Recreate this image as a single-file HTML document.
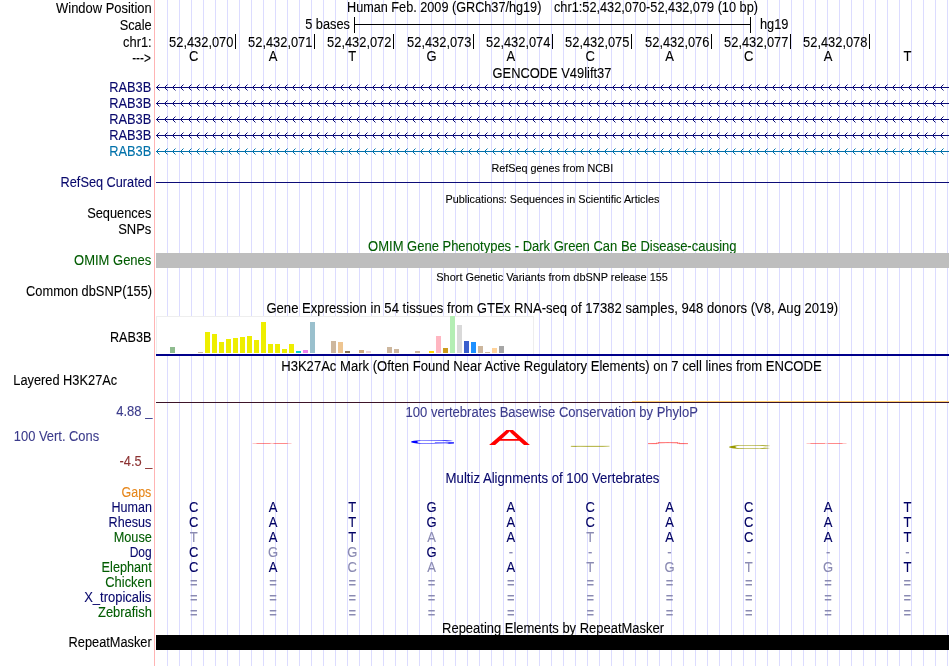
<!DOCTYPE html>
<html lang="en"><head><meta charset="utf-8"><title>UCSC Genome Browser chr1:52,432,070-52,432,079</title>
<style>html,body{margin:0;padding:0;background:#fff}body{width:950px;height:666px;overflow:hidden}svg{display:block;will-change:transform;font-family:"Liberation Sans", sans-serif}text{white-space:pre;stroke-width:0.1px}</style>
</head><body>
<svg width="950" height="666" viewBox="0 0 950 666">
<rect width="950" height="666" fill="#fff"/>
<g id="guides" fill="#dcdcff">
<rect x="167" y="0" width="1" height="666"/>
<rect x="179" y="0" width="1" height="666"/>
<rect x="191" y="0" width="1" height="666"/>
<rect x="203" y="0" width="1" height="666"/>
<rect x="215" y="0" width="1" height="666"/>
<rect x="227" y="0" width="1" height="666"/>
<rect x="239" y="0" width="1" height="666"/>
<rect x="251" y="0" width="1" height="666"/>
<rect x="263" y="0" width="1" height="666"/>
<rect x="275" y="0" width="1" height="666"/>
<rect x="287" y="0" width="1" height="666"/>
<rect x="299" y="0" width="1" height="666"/>
<rect x="311" y="0" width="1" height="666"/>
<rect x="323" y="0" width="1" height="666"/>
<rect x="335" y="0" width="1" height="666"/>
<rect x="347" y="0" width="1" height="666"/>
<rect x="359" y="0" width="1" height="666"/>
<rect x="371" y="0" width="1" height="666"/>
<rect x="383" y="0" width="1" height="666"/>
<rect x="395" y="0" width="1" height="666"/>
<rect x="407" y="0" width="1" height="666"/>
<rect x="419" y="0" width="1" height="666"/>
<rect x="431" y="0" width="1" height="666"/>
<rect x="443" y="0" width="1" height="666"/>
<rect x="455" y="0" width="1" height="666"/>
<rect x="467" y="0" width="1" height="666"/>
<rect x="479" y="0" width="1" height="666"/>
<rect x="491" y="0" width="1" height="666"/>
<rect x="503" y="0" width="1" height="666"/>
<rect x="515" y="0" width="1" height="666"/>
<rect x="527" y="0" width="1" height="666"/>
<rect x="539" y="0" width="1" height="666"/>
<rect x="551" y="0" width="1" height="666"/>
<rect x="563" y="0" width="1" height="666"/>
<rect x="575" y="0" width="1" height="666"/>
<rect x="587" y="0" width="1" height="666"/>
<rect x="599" y="0" width="1" height="666"/>
<rect x="611" y="0" width="1" height="666"/>
<rect x="623" y="0" width="1" height="666"/>
<rect x="635" y="0" width="1" height="666"/>
<rect x="647" y="0" width="1" height="666"/>
<rect x="659" y="0" width="1" height="666"/>
<rect x="671" y="0" width="1" height="666"/>
<rect x="683" y="0" width="1" height="666"/>
<rect x="695" y="0" width="1" height="666"/>
<rect x="707" y="0" width="1" height="666"/>
<rect x="719" y="0" width="1" height="666"/>
<rect x="731" y="0" width="1" height="666"/>
<rect x="743" y="0" width="1" height="666"/>
<rect x="755" y="0" width="1" height="666"/>
<rect x="767" y="0" width="1" height="666"/>
<rect x="779" y="0" width="1" height="666"/>
<rect x="791" y="0" width="1" height="666"/>
<rect x="803" y="0" width="1" height="666"/>
<rect x="815" y="0" width="1" height="666"/>
<rect x="827" y="0" width="1" height="666"/>
<rect x="839" y="0" width="1" height="666"/>
<rect x="851" y="0" width="1" height="666"/>
<rect x="863" y="0" width="1" height="666"/>
<rect x="875" y="0" width="1" height="666"/>
<rect x="887" y="0" width="1" height="666"/>
<rect x="899" y="0" width="1" height="666"/>
<rect x="911" y="0" width="1" height="666"/>
<rect x="923" y="0" width="1" height="666"/>
<rect x="935" y="0" width="1" height="666"/>
<rect x="947" y="0" width="1" height="666"/>
</g>
<rect x="154" y="0" width="1" height="666" fill="#ffb4b4"/>
<text x="56.1" y="12.5" font-size="14" fill="#000" stroke="#000" textLength="95.6" lengthAdjust="spacingAndGlyphs">Window Position</text>
<text x="119.7" y="29.5" font-size="14" fill="#000" stroke="#000" textLength="32" lengthAdjust="spacingAndGlyphs">Scale</text>
<text x="123.1" y="46.7" font-size="14" fill="#000" stroke="#000" textLength="28.6" lengthAdjust="spacingAndGlyphs">chr1:</text>
<text x="132.2" y="62.7" font-size="14" fill="#000" stroke="#000" textLength="18.6" lengthAdjust="spacingAndGlyphs">---&gt;</text>
<text x="347" y="12.3" font-size="14" fill="#000" stroke="#000" textLength="194.4" lengthAdjust="spacingAndGlyphs">Human Feb. 2009 (GRCh37/hg19)</text>
<text x="554" y="12.3" font-size="14" fill="#000" stroke="#000" textLength="204" lengthAdjust="spacingAndGlyphs">chr1:52,432,070-52,432,079 (10 bp)</text>
<g fill="#000">
<rect x="354" y="24" width="397" height="1"/>
<rect x="354" y="17" width="1" height="16"/>
<rect x="750" y="17" width="1" height="16"/>
</g>
<text x="305.2" y="28.5" font-size="14" fill="#000" stroke="#000" textLength="44.8" lengthAdjust="spacingAndGlyphs">5 bases</text>
<text x="760" y="28.5" font-size="14" fill="#000" stroke="#000" textLength="28.5" lengthAdjust="spacingAndGlyphs">hg19</text>
<text x="189.0" y="60.6" font-size="14" fill="#000" stroke="#000" textLength="9.4" lengthAdjust="spacingAndGlyphs">C</text>
<text x="268.66" y="60.6" font-size="14" fill="#000" stroke="#000" textLength="8.68" lengthAdjust="spacingAndGlyphs">A</text>
<text x="348.32" y="60.6" font-size="14" fill="#000" stroke="#000" textLength="7.96" lengthAdjust="spacingAndGlyphs">T</text>
<text x="426.54" y="60.6" font-size="14" fill="#000" stroke="#000" textLength="10.13" lengthAdjust="spacingAndGlyphs">G</text>
<text x="506.56" y="60.6" font-size="14" fill="#000" stroke="#000" textLength="8.68" lengthAdjust="spacingAndGlyphs">A</text>
<text x="585.5" y="60.6" font-size="14" fill="#000" stroke="#000" textLength="9.4" lengthAdjust="spacingAndGlyphs">C</text>
<text x="665.16" y="60.6" font-size="14" fill="#000" stroke="#000" textLength="8.68" lengthAdjust="spacingAndGlyphs">A</text>
<text x="744.1" y="60.6" font-size="14" fill="#000" stroke="#000" textLength="9.4" lengthAdjust="spacingAndGlyphs">C</text>
<text x="823.76" y="60.6" font-size="14" fill="#000" stroke="#000" textLength="8.68" lengthAdjust="spacingAndGlyphs">A</text>
<text x="903.42" y="60.6" font-size="14" fill="#000" stroke="#000" textLength="7.96" lengthAdjust="spacingAndGlyphs">T</text>
<rect x="235" y="34" width="1" height="15" fill="#000"/>
<text x="169.1" y="46.7" font-size="14" fill="#000" stroke="#000" textLength="64.3" lengthAdjust="spacingAndGlyphs">52,432,070</text>
<rect x="314" y="34" width="1" height="15" fill="#000"/>
<text x="248.1" y="46.7" font-size="14" fill="#000" stroke="#000" textLength="64.3" lengthAdjust="spacingAndGlyphs">52,432,071</text>
<rect x="393" y="34" width="1" height="15" fill="#000"/>
<text x="327.1" y="46.7" font-size="14" fill="#000" stroke="#000" textLength="64.3" lengthAdjust="spacingAndGlyphs">52,432,072</text>
<rect x="473" y="34" width="1" height="15" fill="#000"/>
<text x="407.1" y="46.7" font-size="14" fill="#000" stroke="#000" textLength="64.3" lengthAdjust="spacingAndGlyphs">52,432,073</text>
<rect x="552" y="34" width="1" height="15" fill="#000"/>
<text x="486.1" y="46.7" font-size="14" fill="#000" stroke="#000" textLength="64.3" lengthAdjust="spacingAndGlyphs">52,432,074</text>
<rect x="631" y="34" width="1" height="15" fill="#000"/>
<text x="565.1" y="46.7" font-size="14" fill="#000" stroke="#000" textLength="64.3" lengthAdjust="spacingAndGlyphs">52,432,075</text>
<rect x="711" y="34" width="1" height="15" fill="#000"/>
<text x="645.1" y="46.7" font-size="14" fill="#000" stroke="#000" textLength="64.3" lengthAdjust="spacingAndGlyphs">52,432,076</text>
<rect x="790" y="34" width="1" height="15" fill="#000"/>
<text x="724.1" y="46.7" font-size="14" fill="#000" stroke="#000" textLength="64.3" lengthAdjust="spacingAndGlyphs">52,432,077</text>
<rect x="869" y="34" width="1" height="15" fill="#000"/>
<text x="803.1" y="46.7" font-size="14" fill="#000" stroke="#000" textLength="64.3" lengthAdjust="spacingAndGlyphs">52,432,078</text>
<text x="492.6" y="77.7" font-size="14" fill="#000" stroke="#000" textLength="118.8" lengthAdjust="spacingAndGlyphs">GENCODE V49lift37</text>
<g stroke="#0c0c78" stroke-width="1" fill="none">
<path d="M156 87.5H949"/>
<path d="M159.5 84.5L156.5 87.5L159.5 90.5M167.5 84.5L164.5 87.5L167.5 90.5M175.5 84.5L172.5 87.5L175.5 90.5M183.5 84.5L180.5 87.5L183.5 90.5M191.5 84.5L188.5 87.5L191.5 90.5M199.5 84.5L196.5 87.5L199.5 90.5M207.5 84.5L204.5 87.5L207.5 90.5M215.5 84.5L212.5 87.5L215.5 90.5M223.5 84.5L220.5 87.5L223.5 90.5M231.5 84.5L228.5 87.5L231.5 90.5M239.5 84.5L236.5 87.5L239.5 90.5M247.5 84.5L244.5 87.5L247.5 90.5M255.5 84.5L252.5 87.5L255.5 90.5M263.5 84.5L260.5 87.5L263.5 90.5M271.5 84.5L268.5 87.5L271.5 90.5M279.5 84.5L276.5 87.5L279.5 90.5M287.5 84.5L284.5 87.5L287.5 90.5M295.5 84.5L292.5 87.5L295.5 90.5M303.5 84.5L300.5 87.5L303.5 90.5M311.5 84.5L308.5 87.5L311.5 90.5M319.5 84.5L316.5 87.5L319.5 90.5M327.5 84.5L324.5 87.5L327.5 90.5M335.5 84.5L332.5 87.5L335.5 90.5M343.5 84.5L340.5 87.5L343.5 90.5M351.5 84.5L348.5 87.5L351.5 90.5M359.5 84.5L356.5 87.5L359.5 90.5M367.5 84.5L364.5 87.5L367.5 90.5M375.5 84.5L372.5 87.5L375.5 90.5M383.5 84.5L380.5 87.5L383.5 90.5M391.5 84.5L388.5 87.5L391.5 90.5M399.5 84.5L396.5 87.5L399.5 90.5M407.5 84.5L404.5 87.5L407.5 90.5M415.5 84.5L412.5 87.5L415.5 90.5M423.5 84.5L420.5 87.5L423.5 90.5M431.5 84.5L428.5 87.5L431.5 90.5M439.5 84.5L436.5 87.5L439.5 90.5M447.5 84.5L444.5 87.5L447.5 90.5M455.5 84.5L452.5 87.5L455.5 90.5M463.5 84.5L460.5 87.5L463.5 90.5M471.5 84.5L468.5 87.5L471.5 90.5M479.5 84.5L476.5 87.5L479.5 90.5M487.5 84.5L484.5 87.5L487.5 90.5M495.5 84.5L492.5 87.5L495.5 90.5M503.5 84.5L500.5 87.5L503.5 90.5M511.5 84.5L508.5 87.5L511.5 90.5M519.5 84.5L516.5 87.5L519.5 90.5M527.5 84.5L524.5 87.5L527.5 90.5M535.5 84.5L532.5 87.5L535.5 90.5M543.5 84.5L540.5 87.5L543.5 90.5M551.5 84.5L548.5 87.5L551.5 90.5M559.5 84.5L556.5 87.5L559.5 90.5M567.5 84.5L564.5 87.5L567.5 90.5M575.5 84.5L572.5 87.5L575.5 90.5M583.5 84.5L580.5 87.5L583.5 90.5M591.5 84.5L588.5 87.5L591.5 90.5M599.5 84.5L596.5 87.5L599.5 90.5M607.5 84.5L604.5 87.5L607.5 90.5M615.5 84.5L612.5 87.5L615.5 90.5M623.5 84.5L620.5 87.5L623.5 90.5M631.5 84.5L628.5 87.5L631.5 90.5M639.5 84.5L636.5 87.5L639.5 90.5M647.5 84.5L644.5 87.5L647.5 90.5M655.5 84.5L652.5 87.5L655.5 90.5M663.5 84.5L660.5 87.5L663.5 90.5M671.5 84.5L668.5 87.5L671.5 90.5M679.5 84.5L676.5 87.5L679.5 90.5M687.5 84.5L684.5 87.5L687.5 90.5M695.5 84.5L692.5 87.5L695.5 90.5M703.5 84.5L700.5 87.5L703.5 90.5M711.5 84.5L708.5 87.5L711.5 90.5M719.5 84.5L716.5 87.5L719.5 90.5M727.5 84.5L724.5 87.5L727.5 90.5M735.5 84.5L732.5 87.5L735.5 90.5M743.5 84.5L740.5 87.5L743.5 90.5M751.5 84.5L748.5 87.5L751.5 90.5M759.5 84.5L756.5 87.5L759.5 90.5M767.5 84.5L764.5 87.5L767.5 90.5M775.5 84.5L772.5 87.5L775.5 90.5M783.5 84.5L780.5 87.5L783.5 90.5M791.5 84.5L788.5 87.5L791.5 90.5M799.5 84.5L796.5 87.5L799.5 90.5M807.5 84.5L804.5 87.5L807.5 90.5M815.5 84.5L812.5 87.5L815.5 90.5M823.5 84.5L820.5 87.5L823.5 90.5M831.5 84.5L828.5 87.5L831.5 90.5M839.5 84.5L836.5 87.5L839.5 90.5M847.5 84.5L844.5 87.5L847.5 90.5M855.5 84.5L852.5 87.5L855.5 90.5M863.5 84.5L860.5 87.5L863.5 90.5M871.5 84.5L868.5 87.5L871.5 90.5M879.5 84.5L876.5 87.5L879.5 90.5M887.5 84.5L884.5 87.5L887.5 90.5M895.5 84.5L892.5 87.5L895.5 90.5M903.5 84.5L900.5 87.5L903.5 90.5M911.5 84.5L908.5 87.5L911.5 90.5M919.5 84.5L916.5 87.5L919.5 90.5M927.5 84.5L924.5 87.5L927.5 90.5M935.5 84.5L932.5 87.5L935.5 90.5M943.5 84.5L940.5 87.5L943.5 90.5"/>
</g>
<text x="109.3" y="91.7" font-size="14" fill="#08086c" stroke="#08086c" textLength="42" lengthAdjust="spacingAndGlyphs">RAB3B</text>
<g stroke="#0c0c78" stroke-width="1" fill="none">
<path d="M156 103.5H949"/>
<path d="M159.5 100.5L156.5 103.5L159.5 106.5M167.5 100.5L164.5 103.5L167.5 106.5M175.5 100.5L172.5 103.5L175.5 106.5M183.5 100.5L180.5 103.5L183.5 106.5M191.5 100.5L188.5 103.5L191.5 106.5M199.5 100.5L196.5 103.5L199.5 106.5M207.5 100.5L204.5 103.5L207.5 106.5M215.5 100.5L212.5 103.5L215.5 106.5M223.5 100.5L220.5 103.5L223.5 106.5M231.5 100.5L228.5 103.5L231.5 106.5M239.5 100.5L236.5 103.5L239.5 106.5M247.5 100.5L244.5 103.5L247.5 106.5M255.5 100.5L252.5 103.5L255.5 106.5M263.5 100.5L260.5 103.5L263.5 106.5M271.5 100.5L268.5 103.5L271.5 106.5M279.5 100.5L276.5 103.5L279.5 106.5M287.5 100.5L284.5 103.5L287.5 106.5M295.5 100.5L292.5 103.5L295.5 106.5M303.5 100.5L300.5 103.5L303.5 106.5M311.5 100.5L308.5 103.5L311.5 106.5M319.5 100.5L316.5 103.5L319.5 106.5M327.5 100.5L324.5 103.5L327.5 106.5M335.5 100.5L332.5 103.5L335.5 106.5M343.5 100.5L340.5 103.5L343.5 106.5M351.5 100.5L348.5 103.5L351.5 106.5M359.5 100.5L356.5 103.5L359.5 106.5M367.5 100.5L364.5 103.5L367.5 106.5M375.5 100.5L372.5 103.5L375.5 106.5M383.5 100.5L380.5 103.5L383.5 106.5M391.5 100.5L388.5 103.5L391.5 106.5M399.5 100.5L396.5 103.5L399.5 106.5M407.5 100.5L404.5 103.5L407.5 106.5M415.5 100.5L412.5 103.5L415.5 106.5M423.5 100.5L420.5 103.5L423.5 106.5M431.5 100.5L428.5 103.5L431.5 106.5M439.5 100.5L436.5 103.5L439.5 106.5M447.5 100.5L444.5 103.5L447.5 106.5M455.5 100.5L452.5 103.5L455.5 106.5M463.5 100.5L460.5 103.5L463.5 106.5M471.5 100.5L468.5 103.5L471.5 106.5M479.5 100.5L476.5 103.5L479.5 106.5M487.5 100.5L484.5 103.5L487.5 106.5M495.5 100.5L492.5 103.5L495.5 106.5M503.5 100.5L500.5 103.5L503.5 106.5M511.5 100.5L508.5 103.5L511.5 106.5M519.5 100.5L516.5 103.5L519.5 106.5M527.5 100.5L524.5 103.5L527.5 106.5M535.5 100.5L532.5 103.5L535.5 106.5M543.5 100.5L540.5 103.5L543.5 106.5M551.5 100.5L548.5 103.5L551.5 106.5M559.5 100.5L556.5 103.5L559.5 106.5M567.5 100.5L564.5 103.5L567.5 106.5M575.5 100.5L572.5 103.5L575.5 106.5M583.5 100.5L580.5 103.5L583.5 106.5M591.5 100.5L588.5 103.5L591.5 106.5M599.5 100.5L596.5 103.5L599.5 106.5M607.5 100.5L604.5 103.5L607.5 106.5M615.5 100.5L612.5 103.5L615.5 106.5M623.5 100.5L620.5 103.5L623.5 106.5M631.5 100.5L628.5 103.5L631.5 106.5M639.5 100.5L636.5 103.5L639.5 106.5M647.5 100.5L644.5 103.5L647.5 106.5M655.5 100.5L652.5 103.5L655.5 106.5M663.5 100.5L660.5 103.5L663.5 106.5M671.5 100.5L668.5 103.5L671.5 106.5M679.5 100.5L676.5 103.5L679.5 106.5M687.5 100.5L684.5 103.5L687.5 106.5M695.5 100.5L692.5 103.5L695.5 106.5M703.5 100.5L700.5 103.5L703.5 106.5M711.5 100.5L708.5 103.5L711.5 106.5M719.5 100.5L716.5 103.5L719.5 106.5M727.5 100.5L724.5 103.5L727.5 106.5M735.5 100.5L732.5 103.5L735.5 106.5M743.5 100.5L740.5 103.5L743.5 106.5M751.5 100.5L748.5 103.5L751.5 106.5M759.5 100.5L756.5 103.5L759.5 106.5M767.5 100.5L764.5 103.5L767.5 106.5M775.5 100.5L772.5 103.5L775.5 106.5M783.5 100.5L780.5 103.5L783.5 106.5M791.5 100.5L788.5 103.5L791.5 106.5M799.5 100.5L796.5 103.5L799.5 106.5M807.5 100.5L804.5 103.5L807.5 106.5M815.5 100.5L812.5 103.5L815.5 106.5M823.5 100.5L820.5 103.5L823.5 106.5M831.5 100.5L828.5 103.5L831.5 106.5M839.5 100.5L836.5 103.5L839.5 106.5M847.5 100.5L844.5 103.5L847.5 106.5M855.5 100.5L852.5 103.5L855.5 106.5M863.5 100.5L860.5 103.5L863.5 106.5M871.5 100.5L868.5 103.5L871.5 106.5M879.5 100.5L876.5 103.5L879.5 106.5M887.5 100.5L884.5 103.5L887.5 106.5M895.5 100.5L892.5 103.5L895.5 106.5M903.5 100.5L900.5 103.5L903.5 106.5M911.5 100.5L908.5 103.5L911.5 106.5M919.5 100.5L916.5 103.5L919.5 106.5M927.5 100.5L924.5 103.5L927.5 106.5M935.5 100.5L932.5 103.5L935.5 106.5M943.5 100.5L940.5 103.5L943.5 106.5"/>
</g>
<text x="109.3" y="107.7" font-size="14" fill="#08086c" stroke="#08086c" textLength="42" lengthAdjust="spacingAndGlyphs">RAB3B</text>
<g stroke="#0c0c78" stroke-width="1" fill="none">
<path d="M156 119.5H949"/>
<path d="M159.5 116.5L156.5 119.5L159.5 122.5M167.5 116.5L164.5 119.5L167.5 122.5M175.5 116.5L172.5 119.5L175.5 122.5M183.5 116.5L180.5 119.5L183.5 122.5M191.5 116.5L188.5 119.5L191.5 122.5M199.5 116.5L196.5 119.5L199.5 122.5M207.5 116.5L204.5 119.5L207.5 122.5M215.5 116.5L212.5 119.5L215.5 122.5M223.5 116.5L220.5 119.5L223.5 122.5M231.5 116.5L228.5 119.5L231.5 122.5M239.5 116.5L236.5 119.5L239.5 122.5M247.5 116.5L244.5 119.5L247.5 122.5M255.5 116.5L252.5 119.5L255.5 122.5M263.5 116.5L260.5 119.5L263.5 122.5M271.5 116.5L268.5 119.5L271.5 122.5M279.5 116.5L276.5 119.5L279.5 122.5M287.5 116.5L284.5 119.5L287.5 122.5M295.5 116.5L292.5 119.5L295.5 122.5M303.5 116.5L300.5 119.5L303.5 122.5M311.5 116.5L308.5 119.5L311.5 122.5M319.5 116.5L316.5 119.5L319.5 122.5M327.5 116.5L324.5 119.5L327.5 122.5M335.5 116.5L332.5 119.5L335.5 122.5M343.5 116.5L340.5 119.5L343.5 122.5M351.5 116.5L348.5 119.5L351.5 122.5M359.5 116.5L356.5 119.5L359.5 122.5M367.5 116.5L364.5 119.5L367.5 122.5M375.5 116.5L372.5 119.5L375.5 122.5M383.5 116.5L380.5 119.5L383.5 122.5M391.5 116.5L388.5 119.5L391.5 122.5M399.5 116.5L396.5 119.5L399.5 122.5M407.5 116.5L404.5 119.5L407.5 122.5M415.5 116.5L412.5 119.5L415.5 122.5M423.5 116.5L420.5 119.5L423.5 122.5M431.5 116.5L428.5 119.5L431.5 122.5M439.5 116.5L436.5 119.5L439.5 122.5M447.5 116.5L444.5 119.5L447.5 122.5M455.5 116.5L452.5 119.5L455.5 122.5M463.5 116.5L460.5 119.5L463.5 122.5M471.5 116.5L468.5 119.5L471.5 122.5M479.5 116.5L476.5 119.5L479.5 122.5M487.5 116.5L484.5 119.5L487.5 122.5M495.5 116.5L492.5 119.5L495.5 122.5M503.5 116.5L500.5 119.5L503.5 122.5M511.5 116.5L508.5 119.5L511.5 122.5M519.5 116.5L516.5 119.5L519.5 122.5M527.5 116.5L524.5 119.5L527.5 122.5M535.5 116.5L532.5 119.5L535.5 122.5M543.5 116.5L540.5 119.5L543.5 122.5M551.5 116.5L548.5 119.5L551.5 122.5M559.5 116.5L556.5 119.5L559.5 122.5M567.5 116.5L564.5 119.5L567.5 122.5M575.5 116.5L572.5 119.5L575.5 122.5M583.5 116.5L580.5 119.5L583.5 122.5M591.5 116.5L588.5 119.5L591.5 122.5M599.5 116.5L596.5 119.5L599.5 122.5M607.5 116.5L604.5 119.5L607.5 122.5M615.5 116.5L612.5 119.5L615.5 122.5M623.5 116.5L620.5 119.5L623.5 122.5M631.5 116.5L628.5 119.5L631.5 122.5M639.5 116.5L636.5 119.5L639.5 122.5M647.5 116.5L644.5 119.5L647.5 122.5M655.5 116.5L652.5 119.5L655.5 122.5M663.5 116.5L660.5 119.5L663.5 122.5M671.5 116.5L668.5 119.5L671.5 122.5M679.5 116.5L676.5 119.5L679.5 122.5M687.5 116.5L684.5 119.5L687.5 122.5M695.5 116.5L692.5 119.5L695.5 122.5M703.5 116.5L700.5 119.5L703.5 122.5M711.5 116.5L708.5 119.5L711.5 122.5M719.5 116.5L716.5 119.5L719.5 122.5M727.5 116.5L724.5 119.5L727.5 122.5M735.5 116.5L732.5 119.5L735.5 122.5M743.5 116.5L740.5 119.5L743.5 122.5M751.5 116.5L748.5 119.5L751.5 122.5M759.5 116.5L756.5 119.5L759.5 122.5M767.5 116.5L764.5 119.5L767.5 122.5M775.5 116.5L772.5 119.5L775.5 122.5M783.5 116.5L780.5 119.5L783.5 122.5M791.5 116.5L788.5 119.5L791.5 122.5M799.5 116.5L796.5 119.5L799.5 122.5M807.5 116.5L804.5 119.5L807.5 122.5M815.5 116.5L812.5 119.5L815.5 122.5M823.5 116.5L820.5 119.5L823.5 122.5M831.5 116.5L828.5 119.5L831.5 122.5M839.5 116.5L836.5 119.5L839.5 122.5M847.5 116.5L844.5 119.5L847.5 122.5M855.5 116.5L852.5 119.5L855.5 122.5M863.5 116.5L860.5 119.5L863.5 122.5M871.5 116.5L868.5 119.5L871.5 122.5M879.5 116.5L876.5 119.5L879.5 122.5M887.5 116.5L884.5 119.5L887.5 122.5M895.5 116.5L892.5 119.5L895.5 122.5M903.5 116.5L900.5 119.5L903.5 122.5M911.5 116.5L908.5 119.5L911.5 122.5M919.5 116.5L916.5 119.5L919.5 122.5M927.5 116.5L924.5 119.5L927.5 122.5M935.5 116.5L932.5 119.5L935.5 122.5M943.5 116.5L940.5 119.5L943.5 122.5"/>
</g>
<text x="109.3" y="123.7" font-size="14" fill="#08086c" stroke="#08086c" textLength="42" lengthAdjust="spacingAndGlyphs">RAB3B</text>
<g stroke="#0c0c78" stroke-width="1" fill="none">
<path d="M156 135.5H949"/>
<path d="M159.5 132.5L156.5 135.5L159.5 138.5M167.5 132.5L164.5 135.5L167.5 138.5M175.5 132.5L172.5 135.5L175.5 138.5M183.5 132.5L180.5 135.5L183.5 138.5M191.5 132.5L188.5 135.5L191.5 138.5M199.5 132.5L196.5 135.5L199.5 138.5M207.5 132.5L204.5 135.5L207.5 138.5M215.5 132.5L212.5 135.5L215.5 138.5M223.5 132.5L220.5 135.5L223.5 138.5M231.5 132.5L228.5 135.5L231.5 138.5M239.5 132.5L236.5 135.5L239.5 138.5M247.5 132.5L244.5 135.5L247.5 138.5M255.5 132.5L252.5 135.5L255.5 138.5M263.5 132.5L260.5 135.5L263.5 138.5M271.5 132.5L268.5 135.5L271.5 138.5M279.5 132.5L276.5 135.5L279.5 138.5M287.5 132.5L284.5 135.5L287.5 138.5M295.5 132.5L292.5 135.5L295.5 138.5M303.5 132.5L300.5 135.5L303.5 138.5M311.5 132.5L308.5 135.5L311.5 138.5M319.5 132.5L316.5 135.5L319.5 138.5M327.5 132.5L324.5 135.5L327.5 138.5M335.5 132.5L332.5 135.5L335.5 138.5M343.5 132.5L340.5 135.5L343.5 138.5M351.5 132.5L348.5 135.5L351.5 138.5M359.5 132.5L356.5 135.5L359.5 138.5M367.5 132.5L364.5 135.5L367.5 138.5M375.5 132.5L372.5 135.5L375.5 138.5M383.5 132.5L380.5 135.5L383.5 138.5M391.5 132.5L388.5 135.5L391.5 138.5M399.5 132.5L396.5 135.5L399.5 138.5M407.5 132.5L404.5 135.5L407.5 138.5M415.5 132.5L412.5 135.5L415.5 138.5M423.5 132.5L420.5 135.5L423.5 138.5M431.5 132.5L428.5 135.5L431.5 138.5M439.5 132.5L436.5 135.5L439.5 138.5M447.5 132.5L444.5 135.5L447.5 138.5M455.5 132.5L452.5 135.5L455.5 138.5M463.5 132.5L460.5 135.5L463.5 138.5M471.5 132.5L468.5 135.5L471.5 138.5M479.5 132.5L476.5 135.5L479.5 138.5M487.5 132.5L484.5 135.5L487.5 138.5M495.5 132.5L492.5 135.5L495.5 138.5M503.5 132.5L500.5 135.5L503.5 138.5M511.5 132.5L508.5 135.5L511.5 138.5M519.5 132.5L516.5 135.5L519.5 138.5M527.5 132.5L524.5 135.5L527.5 138.5M535.5 132.5L532.5 135.5L535.5 138.5M543.5 132.5L540.5 135.5L543.5 138.5M551.5 132.5L548.5 135.5L551.5 138.5M559.5 132.5L556.5 135.5L559.5 138.5M567.5 132.5L564.5 135.5L567.5 138.5M575.5 132.5L572.5 135.5L575.5 138.5M583.5 132.5L580.5 135.5L583.5 138.5M591.5 132.5L588.5 135.5L591.5 138.5M599.5 132.5L596.5 135.5L599.5 138.5M607.5 132.5L604.5 135.5L607.5 138.5M615.5 132.5L612.5 135.5L615.5 138.5M623.5 132.5L620.5 135.5L623.5 138.5M631.5 132.5L628.5 135.5L631.5 138.5M639.5 132.5L636.5 135.5L639.5 138.5M647.5 132.5L644.5 135.5L647.5 138.5M655.5 132.5L652.5 135.5L655.5 138.5M663.5 132.5L660.5 135.5L663.5 138.5M671.5 132.5L668.5 135.5L671.5 138.5M679.5 132.5L676.5 135.5L679.5 138.5M687.5 132.5L684.5 135.5L687.5 138.5M695.5 132.5L692.5 135.5L695.5 138.5M703.5 132.5L700.5 135.5L703.5 138.5M711.5 132.5L708.5 135.5L711.5 138.5M719.5 132.5L716.5 135.5L719.5 138.5M727.5 132.5L724.5 135.5L727.5 138.5M735.5 132.5L732.5 135.5L735.5 138.5M743.5 132.5L740.5 135.5L743.5 138.5M751.5 132.5L748.5 135.5L751.5 138.5M759.5 132.5L756.5 135.5L759.5 138.5M767.5 132.5L764.5 135.5L767.5 138.5M775.5 132.5L772.5 135.5L775.5 138.5M783.5 132.5L780.5 135.5L783.5 138.5M791.5 132.5L788.5 135.5L791.5 138.5M799.5 132.5L796.5 135.5L799.5 138.5M807.5 132.5L804.5 135.5L807.5 138.5M815.5 132.5L812.5 135.5L815.5 138.5M823.5 132.5L820.5 135.5L823.5 138.5M831.5 132.5L828.5 135.5L831.5 138.5M839.5 132.5L836.5 135.5L839.5 138.5M847.5 132.5L844.5 135.5L847.5 138.5M855.5 132.5L852.5 135.5L855.5 138.5M863.5 132.5L860.5 135.5L863.5 138.5M871.5 132.5L868.5 135.5L871.5 138.5M879.5 132.5L876.5 135.5L879.5 138.5M887.5 132.5L884.5 135.5L887.5 138.5M895.5 132.5L892.5 135.5L895.5 138.5M903.5 132.5L900.5 135.5L903.5 138.5M911.5 132.5L908.5 135.5L911.5 138.5M919.5 132.5L916.5 135.5L919.5 138.5M927.5 132.5L924.5 135.5L927.5 138.5M935.5 132.5L932.5 135.5L935.5 138.5M943.5 132.5L940.5 135.5L943.5 138.5"/>
</g>
<text x="109.3" y="139.7" font-size="14" fill="#08086c" stroke="#08086c" textLength="42" lengthAdjust="spacingAndGlyphs">RAB3B</text>
<g stroke="#0171aa" stroke-width="1" fill="none">
<path d="M156 151.5H949"/>
<path d="M159.5 148.5L156.5 151.5L159.5 154.5M167.5 148.5L164.5 151.5L167.5 154.5M175.5 148.5L172.5 151.5L175.5 154.5M183.5 148.5L180.5 151.5L183.5 154.5M191.5 148.5L188.5 151.5L191.5 154.5M199.5 148.5L196.5 151.5L199.5 154.5M207.5 148.5L204.5 151.5L207.5 154.5M215.5 148.5L212.5 151.5L215.5 154.5M223.5 148.5L220.5 151.5L223.5 154.5M231.5 148.5L228.5 151.5L231.5 154.5M239.5 148.5L236.5 151.5L239.5 154.5M247.5 148.5L244.5 151.5L247.5 154.5M255.5 148.5L252.5 151.5L255.5 154.5M263.5 148.5L260.5 151.5L263.5 154.5M271.5 148.5L268.5 151.5L271.5 154.5M279.5 148.5L276.5 151.5L279.5 154.5M287.5 148.5L284.5 151.5L287.5 154.5M295.5 148.5L292.5 151.5L295.5 154.5M303.5 148.5L300.5 151.5L303.5 154.5M311.5 148.5L308.5 151.5L311.5 154.5M319.5 148.5L316.5 151.5L319.5 154.5M327.5 148.5L324.5 151.5L327.5 154.5M335.5 148.5L332.5 151.5L335.5 154.5M343.5 148.5L340.5 151.5L343.5 154.5M351.5 148.5L348.5 151.5L351.5 154.5M359.5 148.5L356.5 151.5L359.5 154.5M367.5 148.5L364.5 151.5L367.5 154.5M375.5 148.5L372.5 151.5L375.5 154.5M383.5 148.5L380.5 151.5L383.5 154.5M391.5 148.5L388.5 151.5L391.5 154.5M399.5 148.5L396.5 151.5L399.5 154.5M407.5 148.5L404.5 151.5L407.5 154.5M415.5 148.5L412.5 151.5L415.5 154.5M423.5 148.5L420.5 151.5L423.5 154.5M431.5 148.5L428.5 151.5L431.5 154.5M439.5 148.5L436.5 151.5L439.5 154.5M447.5 148.5L444.5 151.5L447.5 154.5M455.5 148.5L452.5 151.5L455.5 154.5M463.5 148.5L460.5 151.5L463.5 154.5M471.5 148.5L468.5 151.5L471.5 154.5M479.5 148.5L476.5 151.5L479.5 154.5M487.5 148.5L484.5 151.5L487.5 154.5M495.5 148.5L492.5 151.5L495.5 154.5M503.5 148.5L500.5 151.5L503.5 154.5M511.5 148.5L508.5 151.5L511.5 154.5M519.5 148.5L516.5 151.5L519.5 154.5M527.5 148.5L524.5 151.5L527.5 154.5M535.5 148.5L532.5 151.5L535.5 154.5M543.5 148.5L540.5 151.5L543.5 154.5M551.5 148.5L548.5 151.5L551.5 154.5M559.5 148.5L556.5 151.5L559.5 154.5M567.5 148.5L564.5 151.5L567.5 154.5M575.5 148.5L572.5 151.5L575.5 154.5M583.5 148.5L580.5 151.5L583.5 154.5M591.5 148.5L588.5 151.5L591.5 154.5M599.5 148.5L596.5 151.5L599.5 154.5M607.5 148.5L604.5 151.5L607.5 154.5M615.5 148.5L612.5 151.5L615.5 154.5M623.5 148.5L620.5 151.5L623.5 154.5M631.5 148.5L628.5 151.5L631.5 154.5M639.5 148.5L636.5 151.5L639.5 154.5M647.5 148.5L644.5 151.5L647.5 154.5M655.5 148.5L652.5 151.5L655.5 154.5M663.5 148.5L660.5 151.5L663.5 154.5M671.5 148.5L668.5 151.5L671.5 154.5M679.5 148.5L676.5 151.5L679.5 154.5M687.5 148.5L684.5 151.5L687.5 154.5M695.5 148.5L692.5 151.5L695.5 154.5M703.5 148.5L700.5 151.5L703.5 154.5M711.5 148.5L708.5 151.5L711.5 154.5M719.5 148.5L716.5 151.5L719.5 154.5M727.5 148.5L724.5 151.5L727.5 154.5M735.5 148.5L732.5 151.5L735.5 154.5M743.5 148.5L740.5 151.5L743.5 154.5M751.5 148.5L748.5 151.5L751.5 154.5M759.5 148.5L756.5 151.5L759.5 154.5M767.5 148.5L764.5 151.5L767.5 154.5M775.5 148.5L772.5 151.5L775.5 154.5M783.5 148.5L780.5 151.5L783.5 154.5M791.5 148.5L788.5 151.5L791.5 154.5M799.5 148.5L796.5 151.5L799.5 154.5M807.5 148.5L804.5 151.5L807.5 154.5M815.5 148.5L812.5 151.5L815.5 154.5M823.5 148.5L820.5 151.5L823.5 154.5M831.5 148.5L828.5 151.5L831.5 154.5M839.5 148.5L836.5 151.5L839.5 154.5M847.5 148.5L844.5 151.5L847.5 154.5M855.5 148.5L852.5 151.5L855.5 154.5M863.5 148.5L860.5 151.5L863.5 154.5M871.5 148.5L868.5 151.5L871.5 154.5M879.5 148.5L876.5 151.5L879.5 154.5M887.5 148.5L884.5 151.5L887.5 154.5M895.5 148.5L892.5 151.5L895.5 154.5M903.5 148.5L900.5 151.5L903.5 154.5M911.5 148.5L908.5 151.5L911.5 154.5M919.5 148.5L916.5 151.5L919.5 154.5M927.5 148.5L924.5 151.5L927.5 154.5M935.5 148.5L932.5 151.5L935.5 154.5M943.5 148.5L940.5 151.5L943.5 154.5"/>
</g>
<text x="109.3" y="155.7" font-size="14" fill="#0171aa" stroke="#0171aa" textLength="42" lengthAdjust="spacingAndGlyphs">RAB3B</text>
<text x="491.4" y="172" font-size="10.8" fill="#000" stroke="#000" textLength="121.8" lengthAdjust="spacingAndGlyphs">RefSeq genes from NCBI</text>
<rect x="156" y="182" width="793" height="1" fill="#0c0c78"/>
<text x="60.6" y="186.7" font-size="14" fill="#08086c" stroke="#08086c" textLength="91.3" lengthAdjust="spacingAndGlyphs">RefSeq Curated</text>
<text x="445.6" y="203" font-size="10.8" fill="#000" stroke="#000" textLength="213.7" lengthAdjust="spacingAndGlyphs">Publications: Sequences in Scientific Articles</text>
<text x="87.2" y="217.5" font-size="14" fill="#000" stroke="#000" textLength="64.1" lengthAdjust="spacingAndGlyphs">Sequences</text>
<text x="118.2" y="233.5" font-size="14" fill="#000" stroke="#000" textLength="33.1" lengthAdjust="spacingAndGlyphs">SNPs</text>
<text x="368.1" y="251" font-size="14" fill="#005c00" stroke="#005c00" textLength="368.4" lengthAdjust="spacingAndGlyphs">OMIM Gene Phenotypes - Dark Green Can Be Disease-causing</text>
<rect x="156" y="253" width="793" height="15" fill="#bebebe"/>
<text x="74.1" y="264.7" font-size="14" fill="#005c00" stroke="#005c00" textLength="77.2" lengthAdjust="spacingAndGlyphs">OMIM Genes</text>
<text x="436.3" y="280.5" font-size="10.8" fill="#000" stroke="#000" textLength="231.6" lengthAdjust="spacingAndGlyphs">Short Genetic Variants from dbSNP release 155</text>
<text x="26.1" y="295.7" font-size="14" fill="#000" stroke="#000" textLength="126" lengthAdjust="spacingAndGlyphs">Common dbSNP(155)</text>
<text x="266.4" y="313.2" font-size="14" fill="#000" stroke="#000" textLength="571.7" lengthAdjust="spacingAndGlyphs">Gene Expression in 54 tissues from GTEx RNA-seq of 17382 samples, 948 donors (V8, Aug 2019)</text>
<rect x="156.5" y="316.5" width="377" height="38" fill="#fff" stroke="#eee" stroke-width="1"/>
<rect x="170" y="347" width="5" height="6" fill="#8fbc8f"/>
<rect x="198" y="352" width="5" height="1" fill="#cdb79e"/>
<rect x="205" y="332" width="5" height="21" fill="#eeee00"/>
<rect x="212" y="334" width="5" height="19" fill="#eeee00"/>
<rect x="219" y="342" width="5" height="11" fill="#eeee00"/>
<rect x="226" y="339" width="5" height="14" fill="#eeee00"/>
<rect x="233" y="338" width="5" height="15" fill="#eeee00"/>
<rect x="240" y="337" width="5" height="16" fill="#eeee00"/>
<rect x="247" y="336" width="5" height="17" fill="#eeee00"/>
<rect x="254" y="340" width="5" height="13" fill="#eeee00"/>
<rect x="261" y="322" width="5" height="31" fill="#eeee00"/>
<rect x="268" y="344" width="5" height="9" fill="#eeee00"/>
<rect x="275" y="344" width="5" height="9" fill="#eeee00"/>
<rect x="282" y="349" width="5" height="4" fill="#eeee00"/>
<rect x="289" y="344" width="5" height="9" fill="#eeee00"/>
<rect x="296" y="351" width="5" height="2" fill="#00cdcd"/>
<rect x="303" y="350" width="5" height="3" fill="#ee82ee"/>
<rect x="310" y="322" width="5" height="31" fill="#9ac0cd"/>
<rect x="331" y="341" width="5" height="12" fill="#cdb79e"/>
<rect x="338" y="342" width="5" height="11" fill="#eec591"/>
<rect x="345" y="351" width="5" height="2" fill="#8b7355"/>
<rect x="359" y="350" width="5" height="3" fill="#cdaa7d"/>
<rect x="366" y="351" width="5" height="2" fill="#eed5d2"/>
<rect x="387" y="347" width="5" height="6" fill="#cdb79e"/>
<rect x="394" y="349" width="5" height="4" fill="#cdb79e"/>
<rect x="415" y="351" width="5" height="2" fill="#cdb79e"/>
<rect x="429" y="351" width="5" height="2" fill="#ffd700"/>
<rect x="436" y="336" width="5" height="17" fill="#ffb6c1"/>
<rect x="443" y="348" width="5" height="5" fill="#cd9b1d"/>
<rect x="450" y="316" width="5" height="37" fill="#b4eeb4"/>
<rect x="457" y="325" width="5" height="28" fill="#d9d9d9"/>
<rect x="464" y="341" width="5" height="12" fill="#3a5fcd"/>
<rect x="471" y="342" width="5" height="11" fill="#1e90ff"/>
<rect x="478" y="346" width="5" height="7" fill="#cdb79e"/>
<rect x="485" y="352" width="5" height="1" fill="#cdb79e"/>
<rect x="492" y="348" width="5" height="5" fill="#ffd39b"/>
<rect x="499" y="346" width="5" height="7" fill="#a6a6a6"/>
<rect x="156" y="354" width="793" height="2" fill="#00008b"/>
<text x="110.0" y="341.6" font-size="14" fill="#000" stroke="#000" textLength="41.3" lengthAdjust="spacingAndGlyphs">RAB3B</text>
<text x="281.2" y="370.7" font-size="14" fill="#000" stroke="#000" textLength="540.5" lengthAdjust="spacingAndGlyphs">H3K27Ac Mark (Often Found Near Active Regulatory Elements) on 7 cell lines from ENCODE</text>
<text x="13.3" y="385" font-size="14" fill="#000" stroke="#000" textLength="103.9" lengthAdjust="spacingAndGlyphs">Layered H3K27Ac</text>
<rect x="632" y="401" width="317" height="1" fill="#ffc75e" opacity="0.9"/>
<rect x="156" y="402" width="793" height="1" fill="#3c1428"/>
<text x="405.6" y="416.6" font-size="14" fill="#3c3c8c" stroke="#3c3c8c" textLength="292.3" lengthAdjust="spacingAndGlyphs">100 vertebrates Basewise Conservation by PhyloP</text>
<text x="13.8" y="440.6" font-size="14" fill="#3c3c8c" stroke="#3c3c8c" textLength="85.4" lengthAdjust="spacingAndGlyphs">100 Vert. Cons</text>
<text x="116.2" y="415.5" font-size="14" fill="#3c3c8c" stroke="#3c3c8c" textLength="36.2" lengthAdjust="spacingAndGlyphs">4.88 _</text>
<text x="119.6" y="465.5" font-size="14" fill="#8c3232" stroke="#8c3232" textLength="32.8" lengthAdjust="spacingAndGlyphs">-4.5 _</text>
<rect x="252.5" y="443" width="39.0" height="1" fill="#ff0000" opacity="0.2"/>
<rect x="256.5" y="443" width="14.0" height="1" fill="#ff0000" opacity="0.3"/>
<rect x="273.5" y="443" width="14.0" height="1" fill="#ff0000" opacity="0.3"/>
<text transform="translate(251.88 444.00) scale(0.5882 0.0145)" x="0" y="0" font-size="100.0" fill="#ff0000" opacity="0.1">A</text>
<text transform="translate(407.69 444.35) scale(0.6588 0.0480)" x="0" y="0" font-size="100.0" fill="#0000ff" opacity="1">G</text>
<text transform="translate(489.08 445.00) scale(0.6154 0.2180)" x="0" y="0" font-size="100.0" fill="#ff0000" opacity="1">A</text>
<rect x="571" y="445.6" width="38.5" height="1.4" fill="#999900" opacity="0.3"/>
<text transform="translate(566.75 445.52) scale(0.6396 -0.0240)" x="0" y="0" font-size="100.0" fill="#999900" opacity="1">C</text>
<g fill="#ff0000" opacity="0.6"><rect x="648" y="443.2" width="9" height="0.9"/><rect x="656" y="442.7" width="3" height="0.9"/><rect x="658" y="442.2" width="20" height="0.9"/><rect x="677" y="442.7" width="3" height="0.9"/><rect x="679" y="443.2" width="9" height="0.9"/></g>
<text transform="translate(647.88 444.10) scale(0.6033 0.0247)" x="0" y="0" font-size="100.0" fill="#ff0000" opacity="0.5">A</text>
<text transform="translate(725.67 445.06) scale(0.6554 -0.0593)" x="0" y="0" font-size="100.0" fill="#999900" opacity="1">C</text>
<rect x="806.5" y="443" width="40.0" height="1" fill="#ff0000" opacity="0.2"/>
<rect x="810.5" y="443" width="14.5" height="1" fill="#ff0000" opacity="0.3"/>
<rect x="828.0" y="443" width="14.5" height="1" fill="#ff0000" opacity="0.3"/>
<text transform="translate(805.88 444.00) scale(0.6033 0.0145)" x="0" y="0" font-size="100.0" fill="#ff0000" opacity="0.1">A</text>
<text x="445.6" y="482.8" font-size="14" fill="#08086c" stroke="#08086c" textLength="213.7" lengthAdjust="spacingAndGlyphs">Multiz Alignments of 100 Vertebrates</text>
<text x="121.6" y="496.5" font-size="14" fill="#e6861a" stroke="#e6861a" textLength="29.7" lengthAdjust="spacingAndGlyphs">Gaps</text>
<text x="111.5" y="511.6" font-size="14" fill="#08086c" stroke="#08086c" textLength="40.4" lengthAdjust="spacingAndGlyphs">Human</text>
<text x="189.0" y="511.6" font-size="14" fill="#000064" stroke="#000064" textLength="9.4" lengthAdjust="spacingAndGlyphs">C</text>
<text x="268.66" y="511.6" font-size="14" fill="#000064" stroke="#000064" textLength="8.68" lengthAdjust="spacingAndGlyphs">A</text>
<text x="348.32" y="511.6" font-size="14" fill="#000064" stroke="#000064" textLength="7.96" lengthAdjust="spacingAndGlyphs">T</text>
<text x="426.54" y="511.6" font-size="14" fill="#000064" stroke="#000064" textLength="10.13" lengthAdjust="spacingAndGlyphs">G</text>
<text x="506.56" y="511.6" font-size="14" fill="#000064" stroke="#000064" textLength="8.68" lengthAdjust="spacingAndGlyphs">A</text>
<text x="585.5" y="511.6" font-size="14" fill="#000064" stroke="#000064" textLength="9.4" lengthAdjust="spacingAndGlyphs">C</text>
<text x="665.16" y="511.6" font-size="14" fill="#000064" stroke="#000064" textLength="8.68" lengthAdjust="spacingAndGlyphs">A</text>
<text x="744.1" y="511.6" font-size="14" fill="#000064" stroke="#000064" textLength="9.4" lengthAdjust="spacingAndGlyphs">C</text>
<text x="823.76" y="511.6" font-size="14" fill="#000064" stroke="#000064" textLength="8.68" lengthAdjust="spacingAndGlyphs">A</text>
<text x="903.42" y="511.6" font-size="14" fill="#000064" stroke="#000064" textLength="7.96" lengthAdjust="spacingAndGlyphs">T</text>
<text x="108.6" y="526.6" font-size="14" fill="#08086c" stroke="#08086c" textLength="42.7" lengthAdjust="spacingAndGlyphs">Rhesus</text>
<text x="189.0" y="526.6" font-size="14" fill="#000064" stroke="#000064" textLength="9.4" lengthAdjust="spacingAndGlyphs">C</text>
<text x="268.66" y="526.6" font-size="14" fill="#000064" stroke="#000064" textLength="8.68" lengthAdjust="spacingAndGlyphs">A</text>
<text x="348.32" y="526.6" font-size="14" fill="#000064" stroke="#000064" textLength="7.96" lengthAdjust="spacingAndGlyphs">T</text>
<text x="426.54" y="526.6" font-size="14" fill="#000064" stroke="#000064" textLength="10.13" lengthAdjust="spacingAndGlyphs">G</text>
<text x="506.56" y="526.6" font-size="14" fill="#000064" stroke="#000064" textLength="8.68" lengthAdjust="spacingAndGlyphs">A</text>
<text x="585.5" y="526.6" font-size="14" fill="#000064" stroke="#000064" textLength="9.4" lengthAdjust="spacingAndGlyphs">C</text>
<text x="665.16" y="526.6" font-size="14" fill="#000064" stroke="#000064" textLength="8.68" lengthAdjust="spacingAndGlyphs">A</text>
<text x="744.1" y="526.6" font-size="14" fill="#000064" stroke="#000064" textLength="9.4" lengthAdjust="spacingAndGlyphs">C</text>
<text x="823.76" y="526.6" font-size="14" fill="#000064" stroke="#000064" textLength="8.68" lengthAdjust="spacingAndGlyphs">A</text>
<text x="903.42" y="526.6" font-size="14" fill="#000064" stroke="#000064" textLength="7.96" lengthAdjust="spacingAndGlyphs">T</text>
<text x="113.7" y="541.6" font-size="14" fill="#005c00" stroke="#005c00" textLength="38.2" lengthAdjust="spacingAndGlyphs">Mouse</text>
<text x="189.72" y="541.6" font-size="14" fill="#8a8ab2" stroke="#8a8ab2" textLength="7.96" lengthAdjust="spacingAndGlyphs">T</text>
<text x="268.66" y="541.6" font-size="14" fill="#000064" stroke="#000064" textLength="8.68" lengthAdjust="spacingAndGlyphs">A</text>
<text x="348.32" y="541.6" font-size="14" fill="#000064" stroke="#000064" textLength="7.96" lengthAdjust="spacingAndGlyphs">T</text>
<text x="427.26" y="541.6" font-size="14" fill="#8a8ab2" stroke="#8a8ab2" textLength="8.68" lengthAdjust="spacingAndGlyphs">A</text>
<text x="506.56" y="541.6" font-size="14" fill="#000064" stroke="#000064" textLength="8.68" lengthAdjust="spacingAndGlyphs">A</text>
<text x="586.22" y="541.6" font-size="14" fill="#8a8ab2" stroke="#8a8ab2" textLength="7.96" lengthAdjust="spacingAndGlyphs">T</text>
<text x="665.16" y="541.6" font-size="14" fill="#000064" stroke="#000064" textLength="8.68" lengthAdjust="spacingAndGlyphs">A</text>
<text x="744.1" y="541.6" font-size="14" fill="#000064" stroke="#000064" textLength="9.4" lengthAdjust="spacingAndGlyphs">C</text>
<text x="823.76" y="541.6" font-size="14" fill="#000064" stroke="#000064" textLength="8.68" lengthAdjust="spacingAndGlyphs">A</text>
<text x="903.42" y="541.6" font-size="14" fill="#000064" stroke="#000064" textLength="7.96" lengthAdjust="spacingAndGlyphs">T</text>
<text x="129.7" y="556.6" font-size="14" fill="#08086c" stroke="#08086c" textLength="22" lengthAdjust="spacingAndGlyphs">Dog</text>
<text x="189.0" y="556.6" font-size="14" fill="#000064" stroke="#000064" textLength="9.4" lengthAdjust="spacingAndGlyphs">C</text>
<text x="267.94" y="556.6" font-size="14" fill="#8a8ab2" stroke="#8a8ab2" textLength="10.13" lengthAdjust="spacingAndGlyphs">G</text>
<text x="347.24" y="556.6" font-size="14" fill="#8a8ab2" stroke="#8a8ab2" textLength="10.13" lengthAdjust="spacingAndGlyphs">G</text>
<text x="426.54" y="556.6" font-size="14" fill="#000064" stroke="#000064" textLength="10.13" lengthAdjust="spacingAndGlyphs">G</text>
<text x="508.73" y="556.6" font-size="14" fill="#8a8ab2" stroke="#8a8ab2" textLength="4.34" lengthAdjust="spacingAndGlyphs">-</text>
<text x="588.03" y="556.6" font-size="14" fill="#8a8ab2" stroke="#8a8ab2" textLength="4.34" lengthAdjust="spacingAndGlyphs">-</text>
<text x="667.33" y="556.6" font-size="14" fill="#8a8ab2" stroke="#8a8ab2" textLength="4.34" lengthAdjust="spacingAndGlyphs">-</text>
<text x="746.63" y="556.6" font-size="14" fill="#8a8ab2" stroke="#8a8ab2" textLength="4.34" lengthAdjust="spacingAndGlyphs">-</text>
<text x="825.93" y="556.6" font-size="14" fill="#8a8ab2" stroke="#8a8ab2" textLength="4.34" lengthAdjust="spacingAndGlyphs">-</text>
<text x="905.23" y="556.6" font-size="14" fill="#8a8ab2" stroke="#8a8ab2" textLength="4.34" lengthAdjust="spacingAndGlyphs">-</text>
<text x="101.6" y="571.6" font-size="14" fill="#005c00" stroke="#005c00" textLength="50.1" lengthAdjust="spacingAndGlyphs">Elephant</text>
<text x="189.0" y="571.6" font-size="14" fill="#000064" stroke="#000064" textLength="9.4" lengthAdjust="spacingAndGlyphs">C</text>
<text x="268.66" y="571.6" font-size="14" fill="#000064" stroke="#000064" textLength="8.68" lengthAdjust="spacingAndGlyphs">A</text>
<text x="347.6" y="571.6" font-size="14" fill="#8a8ab2" stroke="#8a8ab2" textLength="9.4" lengthAdjust="spacingAndGlyphs">C</text>
<text x="427.26" y="571.6" font-size="14" fill="#8a8ab2" stroke="#8a8ab2" textLength="8.68" lengthAdjust="spacingAndGlyphs">A</text>
<text x="506.56" y="571.6" font-size="14" fill="#000064" stroke="#000064" textLength="8.68" lengthAdjust="spacingAndGlyphs">A</text>
<text x="586.22" y="571.6" font-size="14" fill="#8a8ab2" stroke="#8a8ab2" textLength="7.96" lengthAdjust="spacingAndGlyphs">T</text>
<text x="664.43" y="571.6" font-size="14" fill="#8a8ab2" stroke="#8a8ab2" textLength="10.13" lengthAdjust="spacingAndGlyphs">G</text>
<text x="744.82" y="571.6" font-size="14" fill="#8a8ab2" stroke="#8a8ab2" textLength="7.96" lengthAdjust="spacingAndGlyphs">T</text>
<text x="823.03" y="571.6" font-size="14" fill="#8a8ab2" stroke="#8a8ab2" textLength="10.13" lengthAdjust="spacingAndGlyphs">G</text>
<text x="903.42" y="571.6" font-size="14" fill="#000064" stroke="#000064" textLength="7.96" lengthAdjust="spacingAndGlyphs">T</text>
<text x="105.3" y="586.6" font-size="14" fill="#005c00" stroke="#005c00" textLength="46.6" lengthAdjust="spacingAndGlyphs">Chicken</text>
<text x="189.9" y="587.6" font-size="14" fill="#8a8ab2" stroke="#8a8ab2" textLength="7.6" lengthAdjust="spacingAndGlyphs">=</text>
<text x="269.2" y="587.6" font-size="14" fill="#8a8ab2" stroke="#8a8ab2" textLength="7.6" lengthAdjust="spacingAndGlyphs">=</text>
<text x="348.5" y="587.6" font-size="14" fill="#8a8ab2" stroke="#8a8ab2" textLength="7.6" lengthAdjust="spacingAndGlyphs">=</text>
<text x="427.8" y="587.6" font-size="14" fill="#8a8ab2" stroke="#8a8ab2" textLength="7.6" lengthAdjust="spacingAndGlyphs">=</text>
<text x="507.1" y="587.6" font-size="14" fill="#8a8ab2" stroke="#8a8ab2" textLength="7.6" lengthAdjust="spacingAndGlyphs">=</text>
<text x="586.4" y="587.6" font-size="14" fill="#8a8ab2" stroke="#8a8ab2" textLength="7.6" lengthAdjust="spacingAndGlyphs">=</text>
<text x="665.7" y="587.6" font-size="14" fill="#8a8ab2" stroke="#8a8ab2" textLength="7.6" lengthAdjust="spacingAndGlyphs">=</text>
<text x="745.0" y="587.6" font-size="14" fill="#8a8ab2" stroke="#8a8ab2" textLength="7.6" lengthAdjust="spacingAndGlyphs">=</text>
<text x="824.3" y="587.6" font-size="14" fill="#8a8ab2" stroke="#8a8ab2" textLength="7.6" lengthAdjust="spacingAndGlyphs">=</text>
<text x="903.6" y="587.6" font-size="14" fill="#8a8ab2" stroke="#8a8ab2" textLength="7.6" lengthAdjust="spacingAndGlyphs">=</text>
<text x="84.2" y="601.6" font-size="14" fill="#08086c" stroke="#08086c" textLength="67.1" lengthAdjust="spacingAndGlyphs">X_tropicalis</text>
<text x="189.9" y="602.6" font-size="14" fill="#8a8ab2" stroke="#8a8ab2" textLength="7.6" lengthAdjust="spacingAndGlyphs">=</text>
<text x="269.2" y="602.6" font-size="14" fill="#8a8ab2" stroke="#8a8ab2" textLength="7.6" lengthAdjust="spacingAndGlyphs">=</text>
<text x="348.5" y="602.6" font-size="14" fill="#8a8ab2" stroke="#8a8ab2" textLength="7.6" lengthAdjust="spacingAndGlyphs">=</text>
<text x="427.8" y="602.6" font-size="14" fill="#8a8ab2" stroke="#8a8ab2" textLength="7.6" lengthAdjust="spacingAndGlyphs">=</text>
<text x="507.1" y="602.6" font-size="14" fill="#8a8ab2" stroke="#8a8ab2" textLength="7.6" lengthAdjust="spacingAndGlyphs">=</text>
<text x="586.4" y="602.6" font-size="14" fill="#8a8ab2" stroke="#8a8ab2" textLength="7.6" lengthAdjust="spacingAndGlyphs">=</text>
<text x="665.7" y="602.6" font-size="14" fill="#8a8ab2" stroke="#8a8ab2" textLength="7.6" lengthAdjust="spacingAndGlyphs">=</text>
<text x="745.0" y="602.6" font-size="14" fill="#8a8ab2" stroke="#8a8ab2" textLength="7.6" lengthAdjust="spacingAndGlyphs">=</text>
<text x="824.3" y="602.6" font-size="14" fill="#8a8ab2" stroke="#8a8ab2" textLength="7.6" lengthAdjust="spacingAndGlyphs">=</text>
<text x="903.6" y="602.6" font-size="14" fill="#8a8ab2" stroke="#8a8ab2" textLength="7.6" lengthAdjust="spacingAndGlyphs">=</text>
<text x="98.0" y="616.6" font-size="14" fill="#005c00" stroke="#005c00" textLength="53.9" lengthAdjust="spacingAndGlyphs">Zebrafish</text>
<text x="189.9" y="617.6" font-size="14" fill="#8a8ab2" stroke="#8a8ab2" textLength="7.6" lengthAdjust="spacingAndGlyphs">=</text>
<text x="269.2" y="617.6" font-size="14" fill="#8a8ab2" stroke="#8a8ab2" textLength="7.6" lengthAdjust="spacingAndGlyphs">=</text>
<text x="348.5" y="617.6" font-size="14" fill="#8a8ab2" stroke="#8a8ab2" textLength="7.6" lengthAdjust="spacingAndGlyphs">=</text>
<text x="427.8" y="617.6" font-size="14" fill="#8a8ab2" stroke="#8a8ab2" textLength="7.6" lengthAdjust="spacingAndGlyphs">=</text>
<text x="507.1" y="617.6" font-size="14" fill="#8a8ab2" stroke="#8a8ab2" textLength="7.6" lengthAdjust="spacingAndGlyphs">=</text>
<text x="586.4" y="617.6" font-size="14" fill="#8a8ab2" stroke="#8a8ab2" textLength="7.6" lengthAdjust="spacingAndGlyphs">=</text>
<text x="665.7" y="617.6" font-size="14" fill="#8a8ab2" stroke="#8a8ab2" textLength="7.6" lengthAdjust="spacingAndGlyphs">=</text>
<text x="745.0" y="617.6" font-size="14" fill="#8a8ab2" stroke="#8a8ab2" textLength="7.6" lengthAdjust="spacingAndGlyphs">=</text>
<text x="824.3" y="617.6" font-size="14" fill="#8a8ab2" stroke="#8a8ab2" textLength="7.6" lengthAdjust="spacingAndGlyphs">=</text>
<text x="903.6" y="617.6" font-size="14" fill="#8a8ab2" stroke="#8a8ab2" textLength="7.6" lengthAdjust="spacingAndGlyphs">=</text>
<text x="442.1" y="632.8" font-size="14" fill="#000" stroke="#000" textLength="221.9" lengthAdjust="spacingAndGlyphs">Repeating Elements by RepeatMasker</text>
<rect x="156" y="635" width="793" height="15" fill="#000"/>
<text x="68.6" y="646.7" font-size="14" fill="#000" stroke="#000" textLength="83.1" lengthAdjust="spacingAndGlyphs">RepeatMasker</text>
</svg></body></html>
